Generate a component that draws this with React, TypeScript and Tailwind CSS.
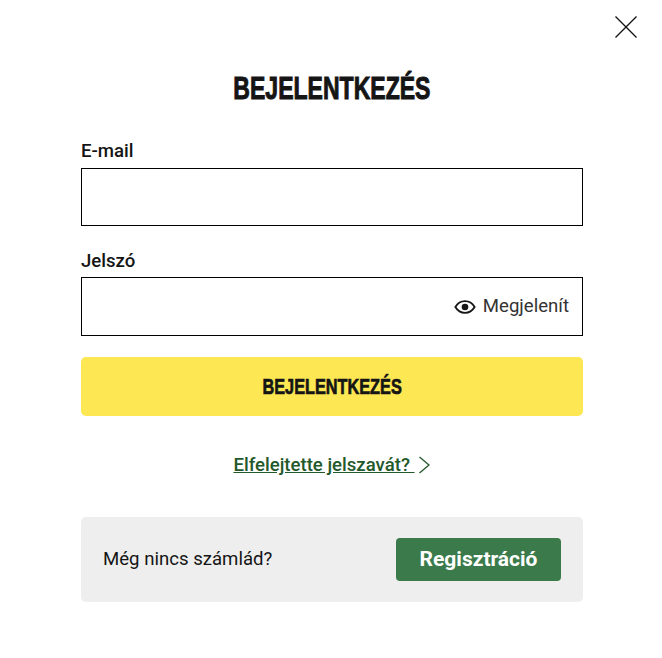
import { useState } from 'react'

const displayFont = "font-['Liberation_Sans',sans-serif] font-bold"

const App = () => {
  const [showPassword, setShowPassword] = useState(false)

  return (
    <div className="relative min-h-[658px] w-full bg-white pl-[81px] pr-[79px] pt-[70px] font-['Roboto',sans-serif]">
      <button aria-label="Bezárás" className="absolute right-[24px] top-[15px] h-[24px] w-[24px] text-[#111]">
        <svg viewBox="0 0 24 24" className="h-full w-full" fill="none" stroke="currentColor" strokeWidth="1.3">
          <path d="M1.5 1.5l21 21M22.5 1.5l-21 21" />
        </svg>
      </button>

      <h2 className={`${displayFont} h-[36px] text-center text-[32px] leading-[36px] text-[#151515] [-webkit-text-stroke:1px_#151515]`}>
        <span className="inline-block scale-x-[0.72]">BEJELENTKEZÉS</span>
      </h2>

      <form className="mt-[33px]">
        <label className="block text-[18.6px] font-medium leading-[24px] text-[#151515]">E-mail</label>
        <input type="email" className="mt-[5px] block h-[58px] w-full border border-black bg-white px-3 outline-none" />

        <label className="mt-[23px] block text-[18.6px] font-medium leading-[24px] text-[#151515]">Jelszó</label>
        <div className="relative mt-[4px]">
          <input type={showPassword ? 'text' : 'password'} className="block h-[59px] w-full border border-black bg-white px-3 outline-none" />
          <button
            type="button"
            onClick={() => setShowPassword(!showPassword)}
            className="absolute right-[14px] top-0 flex h-full items-center gap-[7px] text-[18.6px] text-[#333]"
          >
            <svg viewBox="0 0 24 16" className="h-[16px] w-[22px]" fill="none">
              <path d="M1.5 8C4 3.8 7.6 1.6 12 1.6S20 3.8 22.5 8C20 12.2 16.4 14.4 12 14.4S4 12.2 1.5 8z" stroke="#151515" strokeWidth="2" />
              <circle cx="12" cy="8" r="3.6" fill="#151515" />
            </svg>
            Megjelenít
          </button>
        </div>

        <button type="button" className={`${displayFont} mt-[21px] block h-[59px] w-full rounded-[5px] bg-[#fde753] text-center text-[22px] text-[#151515] [-webkit-text-stroke:0.7px_#151515]`}>
          <span className="inline-block scale-x-[0.74]">BEJELENTKEZÉS</span>
        </button>
      </form>

      <div className="mt-[37px] flex h-[24px] items-center justify-center gap-[3px] pr-[1px]">
        <a href="#" className="text-[18.6px] font-medium leading-[24px] text-[#23592a] underline">Elfelejtette jelszavát?&nbsp;</a>
        <svg viewBox="0 0 12 18" className="h-[18px] w-[12px]" fill="none" stroke="#23592a" strokeWidth="1.3">
          <path d="M1.5 1l9.5 8-9.5 8" />
        </svg>
      </div>

      <div className="mt-[40px] flex h-[85px] items-center justify-between rounded-[5px] bg-[#eeeeee] pl-[22px] pr-[22px]">
        <span className="text-[18.6px] text-[#151515]">Még nincs számlád?</span>
        <button className="h-[43px] w-[165px] rounded-[4px] bg-[#3a7a4b] text-[21px] font-bold text-white">Regisztráció</button>
      </div>
    </div>
  )
}

export default App
